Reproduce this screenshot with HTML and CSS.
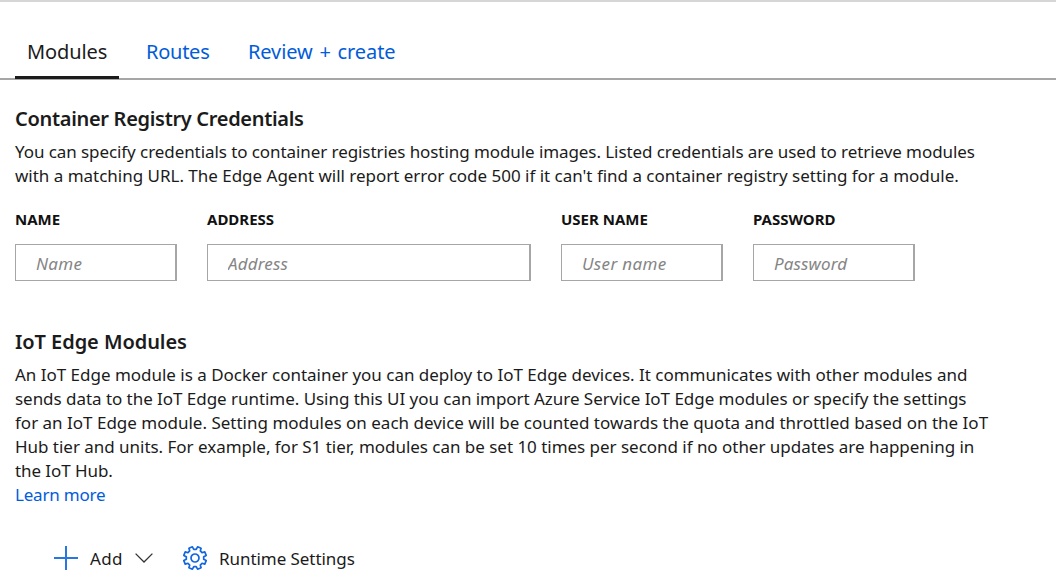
FILE: index.html
```html
<!DOCTYPE html>
<html lang="en">
<head>
<meta charset="utf-8">
<title>Set modules</title>
<link rel="stylesheet" href="styles.css">
</head>
<body>
<nav class="tabs">
  <a class="tab tab-active">Modules</a>
  <a class="tab tab-routes">Routes</a>
  <a class="tab tab-review">Review + create</a>
</nav>
<main class="content">
  <section>
    <h2 class="heading-registry">Container Registry Credentials</h2>
    <p>
      <span class="line snug-4">You can specify credentials to container registries hosting module images. Listed credentials are used to retrieve modules</span>
      <span class="line snug-1">with a matching URL. The Edge Agent will report error code 500 if it can't find a container registry setting for a module.</span>
    </p>
    <form class="fields">
      <label class="field"><span>NAME</span><input class="wide" placeholder="Name"></label>
      <label class="field"><span>ADDRESS</span><input placeholder="Address"></label>
      <label class="field"><span>USER NAME</span><input class="wide" placeholder="User name"></label>
      <label class="field"><span>PASSWORD</span><input placeholder="Password"></label>
    </form>
  </section>
  <section class="modules">
    <h2 class="heading-modules">IoT Edge Modules</h2>
    <p>
      <span class="line snug-1">An IoT Edge module is a Docker container you can deploy to IoT Edge devices. It communicates with other modules and</span>
      <span class="line snug-3">sends data to the IoT Edge runtime. Using this UI you can import Azure Service IoT Edge modules or specify the settings</span>
      <span class="line">for an IoT Edge module. Setting modules on each device will be counted towards the quota and throttled based on the IoT</span>
      <span class="line snug-2">Hub tier and units. For example, for S1 tier, modules can be set 10 times per second if no other updates are happening in</span>
      <span class="line snug-4">the IoT Hub.</span>
      <a class="line link">Learn more</a>
    </p>
    <div class="toolbar">
      <button class="add">
        <svg width="24" height="24" viewBox="0 0 24 24"><path d="M12 0v24M0 12h24" stroke="#2a76e0" stroke-width="2"/></svg>
        <span class="add-label">Add</span>
        <svg width="18" height="10" viewBox="0 0 18 10"><path d="M.6.6 9 9 17.4.6" fill="none" stroke="#333" stroke-width="1.3"/></svg>
      </button>
      <button class="runtime">
        <svg width="26" height="26" viewBox="-13 -13 26 26"><g fill="none" stroke="#1267e0" stroke-width="1.7" stroke-linejoin="round"><path d="M1.22-8.7 2.59-11.2 6.09-9.75 5.3-7.03 7.03-5.3 9.75-6.09 11.2-2.59 8.7-1.22 8.7 1.22 11.2 2.59 9.75 6.09 7.03 5.3 5.3 7.03 6.09 9.75 2.59 11.2 1.22 8.7-1.22 8.7-2.59 11.2-6.09 9.75-5.3 7.03-7.03 5.3-9.75 6.09-11.2 2.59-8.7 1.22-8.7-1.22-11.2-2.59-9.75-6.09-7.03-5.3-5.3-7.03-6.09-9.75-2.59-11.2-1.22-8.7Z"/><circle r="4"/></g></svg>
        <span class="runtime-label">Runtime Settings</span>
      </button>
    </div>
  </section>
</main>
</body>
</html>
```
FILE: styles.css
```css
* { box-sizing: border-box; }
body {
  margin: 0;
  height: 574px;
  overflow: hidden;
  border-top: 2px solid #d6d6d6;
  background: #fff;
  color: #1b1b1b;
  font: 17px/24px "Noto Sans", "Open Sans", sans-serif;
}
.tabs {
  display: flex;
  height: 78px;
  padding-left: 15px;
  border-bottom: 2px solid #a6a6a6;
  font-size: 20px;
  white-space: nowrap;
}
.tab { height: 77px; padding: 38px 0 0 12px; color: #015cda; width: 102px; }
.tab-active {
  width: 104px;
  margin-right: 15px;
  color: #1b1b1b;
  border-bottom: 3px solid #1b1b1b;
  letter-spacing: -0.1px;
}
.tab-routes { letter-spacing: -0.25px; }
.tab-review { letter-spacing: -0.1px; word-spacing: 1.7px; }
.content { padding: 25px 15px 0; }
h2 { margin: 0 0 8px; font-size: 20px; line-height: 27px; font-weight: 600; white-space: nowrap; }
.heading-registry { letter-spacing: -0.31px; }
.heading-modules { letter-spacing: -0.06px; }
p { margin: 0; }
.line { display: block; width: max-content; white-space: nowrap; }
.snug-1 { letter-spacing: -0.015px; }
.snug-2 { letter-spacing: -0.028px; }
.snug-3 { letter-spacing: -0.042px; }
.snug-4 { letter-spacing: -0.076px; }
.link { color: #015cda; letter-spacing: -0.2px; }
.fields {
  display: grid;
  grid-template-columns: 162px 324px 162px 162px;
  column-gap: 30px;
  margin-top: 19px;
}
.field { display: flex; flex-direction: column; font-size: 15px; font-weight: 700; color: #111; }
.field span { width: max-content; }
.field input {
  width: 100%;
  height: 37px;
  margin-top: 13px;
  padding: 2px 20px 0;
  border: 1px solid #a6a6a6;
  border-right-width: 2px;
  border-radius: 0;
  font: italic 17px "Noto Sans", "Open Sans", sans-serif;
  letter-spacing: 0.15px;
}
.field .wide { letter-spacing: 0.35px; }
.field input::placeholder { color: #858585; opacity: 1; }
.modules { margin-top: 47px; }
.toolbar { display: flex; align-items: center; margin: 38px 0 0 39px; height: 26px; }
.toolbar button {
  display: flex;
  align-items: center;
  padding: 0;
  border: 0;
  background: none;
  color: inherit;
  font: inherit;
  white-space: nowrap;
}
.toolbar svg { flex: none; }
.add { width: 128px; gap: 12px; }
.add-label { padding-top: 1px; letter-spacing: 0.33px; }
.runtime { gap: 11px; }
.runtime-label { padding-top: 1px; letter-spacing: -0.06px; }
```
